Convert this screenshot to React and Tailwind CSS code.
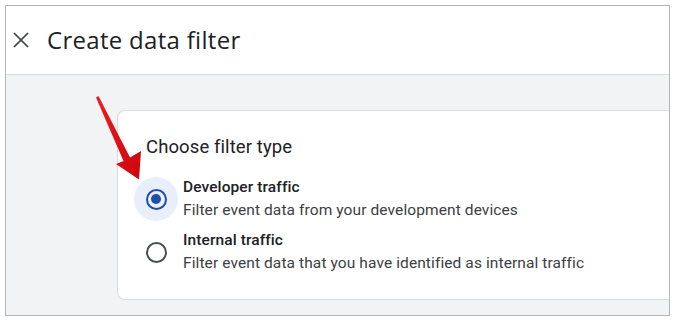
const OPTIONS = [
  {
    id: "developer",
    label: "Developer traffic",
    desc: "Filter event data from your development devices",
    checked: true,
  },
  {
    id: "internal",
    label: "Internal traffic",
    desc: "Filter event data that you have identified as internal traffic",
    checked: false,
  },
];

function Radio({ checked }) {
  return (
    <div
      className={`w-[44px] h-[44px] shrink-0 rounded-full flex items-center justify-center ${
        checked ? "bg-[#e8eefa]" : ""
      }`}
    >
      <div
        className={`w-[21px] h-[21px] rounded-full border-[2.5px] flex items-center justify-center ${
          checked ? "border-[#1f4fa5]" : "border-[#4a4d51]"
        }`}
      >
        {checked && <div className="w-[10px] h-[10px] rounded-full bg-[#1f4fa5]" />}
      </div>
    </div>
  );
}

// red annotation arrow pointing at the selected radio
function Arrow() {
  return (
    <svg
      className="absolute left-0 top-0 pointer-events-none"
      width="160"
      height="190"
      viewBox="0 0 160 190"
    >
      <defs>
        <linearGradient id="ag" x1="0" y1="0" x2="1" y2="1">
          <stop offset="0" stopColor="#ee1c22" />
          <stop offset="1" stopColor="#cc060d" />
        </linearGradient>
      </defs>
      <path
        d="M96 97.5 L98.5 96 L130 157.5 L141 151 L139 179.5 L116 164 L123.5 161 Z"
        fill="url(#ag)"
      />
    </svg>
  );
}

export default function App() {
  return (
    <div className="w-[675px] h-[321px] bg-white p-[5px] font-['Roboto',sans-serif] relative">
      <div className="w-full h-full border border-[#b5b5b5] flex flex-col overflow-hidden">
        {/* Header */}
        <div className="h-[69px] shrink-0 bg-white border-b border-[#dadce0] flex items-center pl-[7px]">
          <svg width="16" height="16" viewBox="0 0 16 16" className="text-[#3c4043]">
            <path d="M1 1 L15 15 M15 1 L1 15" stroke="currentColor" strokeWidth="1.7" />
          </svg>
          <h1 className="ml-[18px] text-[24px] tracking-[0.3px] font-['Open_Sans',sans-serif] text-[#202124] pb-[1px]">
            Create data filter
          </h1>
        </div>

        {/* Body */}
        <div className="flex-1 bg-[#f1f3f4] pt-[35px] pl-[111px]">
          <div className="bg-white border border-[#dadce0] border-r-0 rounded-l-[8px] h-[190px] pl-[28px] pt-[24px]">
            <h2 className="text-[18.5px] tracking-[0.1px] text-[#202124] leading-[24px]">
              Choose filter type
            </h2>
            <div className="mt-[17px] flex flex-col gap-[7px] -ml-[12px]">
              {OPTIONS.map((o) => (
                <div key={o.id} className="flex items-center gap-[5px]">
                  <Radio checked={o.checked} />
                  <div className="flex flex-col">
                    <span className="text-[15.5px] tracking-[0.1px] font-medium text-[#202124] leading-[23px]">
                      {o.label}
                    </span>
                    <span className="text-[15.5px] tracking-[0.1px] text-[#3c4043] leading-[23px]">
                      {o.desc}
                    </span>
                  </div>
                </div>
              ))}
            </div>
          </div>
        </div>
      </div>
      <Arrow />
    </div>
  );
}
